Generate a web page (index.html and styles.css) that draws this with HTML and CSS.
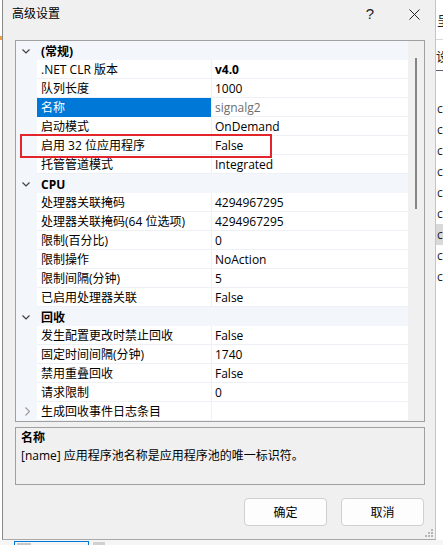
FILE: index.html
```html
<!DOCTYPE html>
<html lang="zh-CN">
<head>
<meta charset="utf-8">
<title>高级设置</title>
<link rel="stylesheet" href="styles.css">
</head>
<body>
<div class="screen">
  <div class="top">
    <div class="bg-left"><span class="bg-mark"></span></div>
    <div class="dialog">
      <div class="titlebar">
        <span class="title">高级设置</span>
        <span class="help">?</span>
        <span class="close"><svg width="11" height="11" viewBox="0 0 11 11"><path d="M0.5 0.5 L10.5 10.5 M10.5 0.5 L0.5 10.5" stroke="#222" stroke-width="1" fill="none"/></svg></span>
      </div>

      <div class="grid">
        <div class="rows">
          <div class="cat"><span class="chev"><svg width="8" height="5" viewBox="0 0 8 5"><path d="M0.5 0.5 L4 4 L7.5 0.5" stroke="#404040" stroke-width="1.2" fill="none"/></svg></span><span class="cat-name">(常规)</span></div>
          <div class="row"><span class="g"></span><span class="k">.NET CLR 版本</span><span class="v bold">v4.0</span></div>
          <div class="row"><span class="g"></span><span class="k">队列长度</span><span class="v">1000</span></div>
          <div class="row sel"><span class="g"></span><span class="k">名称</span><span class="v ro">signalg2</span></div>
          <div class="row"><span class="g"></span><span class="k">启动模式</span><span class="v">OnDemand</span></div>
          <div class="row"><span class="g"></span><span class="k">启用 32 位应用程序</span><span class="v">False</span></div>
          <div class="row"><span class="g"></span><span class="k">托管管道模式</span><span class="v">Integrated</span></div>

          <div class="cat"><span class="chev"><svg width="8" height="5" viewBox="0 0 8 5"><path d="M0.5 0.5 L4 4 L7.5 0.5" stroke="#404040" stroke-width="1.2" fill="none"/></svg></span><span class="cat-name">CPU</span></div>
          <div class="row"><span class="g"></span><span class="k">处理器关联掩码</span><span class="v">4294967295</span></div>
          <div class="row"><span class="g"></span><span class="k">处理器关联掩码(64 位选项)</span><span class="v">4294967295</span></div>
          <div class="row"><span class="g"></span><span class="k">限制(百分比)</span><span class="v">0</span></div>
          <div class="row"><span class="g"></span><span class="k">限制操作</span><span class="v">NoAction</span></div>
          <div class="row"><span class="g"></span><span class="k">限制间隔(分钟)</span><span class="v">5</span></div>
          <div class="row"><span class="g"></span><span class="k">已启用处理器关联</span><span class="v">False</span></div>

          <div class="cat"><span class="chev"><svg width="8" height="5" viewBox="0 0 8 5"><path d="M0.5 0.5 L4 4 L7.5 0.5" stroke="#404040" stroke-width="1.2" fill="none"/></svg></span><span class="cat-name">回收</span></div>
          <div class="row"><span class="g"></span><span class="k">发生配置更改时禁止回收</span><span class="v">False</span></div>
          <div class="row"><span class="g"></span><span class="k">固定时间间隔(分钟)</span><span class="v">1740</span></div>
          <div class="row"><span class="g"></span><span class="k">禁用重叠回收</span><span class="v">False</span></div>
          <div class="row"><span class="g"></span><span class="k">请求限制</span><span class="v">0</span></div>
          <div class="row"><span class="g"><svg width="5" height="9" viewBox="0 0 5 9"><path d="M0.5 0.5 L4.5 4.5 L0.5 8.5" stroke="#9a9a9a" stroke-width="1.1" fill="none"/></svg></span><span class="k">生成回收事件日志条目</span><span class="v"></span></div>
        </div>
        <div class="scroll"><div class="thumb"></div></div>
        <div class="highlight"></div>
      </div>

      <div class="desc">
        <div class="desc-title">名称</div>
        <div class="desc-text">[name] 应用程序池名称是应用程序池的唯一标识符。</div>
      </div>

      <div class="buttons">
        <button class="btn">确定</button>
        <button class="btn">取消</button>
      </div>

      <svg class="grip" width="8" height="8" viewBox="0 0 8 8">
        <rect x="6" y="0" width="2" height="2" fill="#b8b8b8"/>
        <rect x="3" y="3" width="2" height="2" fill="#b8b8b8"/>
        <rect x="6" y="3" width="2" height="2" fill="#b8b8b8"/>
        <rect x="0" y="6" width="2" height="2" fill="#b8b8b8"/>
        <rect x="3" y="6" width="2" height="2" fill="#b8b8b8"/>
        <rect x="6" y="6" width="2" height="2" fill="#b8b8b8"/>
      </svg>
    </div>
    <div class="bg-right">
      <div class="br-item br-a">呈</div>
      <div class="br-line"></div>
      <div class="br-item br-b">设</div>
      <div class="br-dark"></div>
      <div class="br-list">
        <div class="br-c">c</div>
        <div class="br-c">c</div>
        <div class="br-c">c</div>
        <div class="br-c">c</div>
        <div class="br-c">c</div>
        <div class="br-c">c</div>
        <div class="br-c hl">c</div>
        <div class="br-c">c</div>
        <div class="br-c">c</div>
      </div>
    </div>
  </div>
  <div class="bottom">
    <div class="tab-focus"><span class="tab-ico"></span></div>
    <span class="tab-ico2"></span>
  </div>
</div>
</body>
</html>
```

FILE: styles.css
```css
* { box-sizing: border-box; }

html, body {
  margin: 0;
  padding: 0;
  background: #ffffff;
}

body {
  width: 443px;
  height: 545px;
  overflow: hidden;
  font-family: "Open Sans", "Noto Sans CJK SC", sans-serif;
  font-size: 12px;
  color: #000;
}

.screen {
  width: 443px;
  height: 545px;
  display: flex;
  flex-direction: column;
}

.top {
  display: flex;
  height: 540px;
}

.bg-left {
  width: 2px;
  background: #ffffff;
  padding-top: 36px;
}

.bg-mark {
  display: block;
  width: 2px;
  height: 4px;
  background: #f0a040;
}

.dialog {
  position: relative;
  width: 434px;
  height: 540px;
  background: #f0f0f0;
  border-left: 1px solid #8a8a8a;
  border-right: 1px solid #c4c4c4;
  border-bottom: 1px solid #a8a8a8;
  display: flex;
  flex-direction: column;
}

.titlebar {
  height: 40px;
  display: flex;
  align-items: flex-start;
  padding-top: 6px;
  padding-left: 9px;
}

.title {
  line-height: 16px;
  font-size: 12px;
}

.help {
  margin-left: auto;
  width: 46px;
  text-align: center;
  font-family: "Liberation Sans", sans-serif;
  font-size: 15px;
  line-height: 16px;
  color: #222;
}

.close {
  width: 42px;
  height: 16px;
  display: flex;
  align-items: center;
  justify-content: center;
  padding-top: 1px;
}

.grid {
  position: relative;
  margin-left: 12px;
  width: 410px;
  height: 382px;
  border: 1px solid #a0a0a0;
  background: #ffffff;
  display: flex;
}

.rows {
  width: 392px;
  display: flex;
  flex-direction: column;
}

.cat {
  height: 19px;
  background: #f3f6fa;
  display: flex;
  align-items: center;
}

.chev {
  width: 21px;
  display: flex;
  justify-content: flex-end;
  padding-right: 7px;
  padding-top: 1px;
}

.cat-name {
  padding-left: 4px;
  padding-top: 1px;
  font-weight: bold;
  line-height: 19px;
}

.row {
  height: 19px;
  display: flex;
}

.g {
  width: 21px;
  height: 19px;
  background: #f3f6fa;
  display: flex;
  align-items: center;
  justify-content: center;
  padding-left: 1px;
}

.k {
  width: 174px;
  height: 19px;
  line-height: 18px;
  padding-top: 1px;
  padding-left: 4px;
  border-bottom: 1px solid #edf0f5;
  white-space: nowrap;
  overflow: hidden;
}

.v {
  flex: 1;
  height: 19px;
  line-height: 18px;
  padding-top: 1px;
  padding-left: 3px;
  border-left: 1px solid #edf0f5;
  border-bottom: 1px solid #edf0f5;
  white-space: nowrap;
  overflow: hidden;
}

.bold { font-weight: bold; }

.sel .k {
  background: #0078d7;
  color: #ffffff;
  border-bottom-color: #0078d7;
}

.ro { color: #6d6d6d; }

.scroll {
  width: 16px;
  background: #f0f0f0;
  padding-top: 17px;
  padding-left: 7px;
}

.thumb {
  width: 2px;
  height: 151px;
  background: #858585;
}

.highlight {
  position: absolute;
  left: 4px;
  top: 93px;
  width: 252px;
  height: 24px;
  border: 2px solid #e3242b;
}

.desc {
  margin-top: 5px;
  margin-left: 12px;
  width: 410px;
  height: 58px;
  border: 1px solid #a0a0a0;
  background: #f0f0f0;
  padding: 2px 5px;
}

.desc-title {
  font-weight: bold;
  line-height: 16px;
}

.desc-text {
  margin-top: 2px;
  line-height: 16px;
}

.buttons {
  margin-top: 13px;
  display: flex;
  justify-content: flex-end;
  gap: 14px;
  padding-right: 11px;
}

.btn {
  width: 83px;
  height: 28px;
  background: #fdfdfd;
  border: 1px solid #d0d0d0;
  border-radius: 4px;
  font-family: "Open Sans", "Noto Sans CJK SC", sans-serif;
  font-size: 12px;
  color: #000;
  padding: 0;
}

.grip {
  position: absolute;
  right: 2px;
  bottom: 2px;
}

.bg-right {
  width: 7px;
  background: #ffffff;
  overflow: hidden;
  display: flex;
  flex-direction: column;
  font-family: "Noto Sans CJK SC", sans-serif;
}

.br-item {
  font-size: 13px;
  line-height: 16px;
  white-space: nowrap;
  color: #222;
}

.br-a { margin-top: 12px; margin-left: 1px; }

.br-line {
  margin-top: 11px;
  height: 1px;
  background: #d8d8d8;
}

.br-b {
  margin-top: 8px;
  margin-left: 0;
}

.br-dark {
  margin-top: 6px;
  height: 1px;
  background: #606070;
}

.br-list {
  margin-top: 27px;
  display: flex;
  flex-direction: column;
}

.br-c {
  height: 21px;
  line-height: 21px;
  font-family: "Open Sans", sans-serif;
  font-size: 12px;
  color: #222;
  padding-left: 1px;
}

.br-c.hl { background: #d9d9d9; }

.bottom {
  height: 5px;
  background: #f5f5f5;
  display: flex;
  align-items: flex-end;
  padding-left: 14px;
}

.tab-focus {
  width: 75px;
  height: 4px;
  border: 1px solid #0078d7;
  border-bottom: none;
  padding-left: 2px;
  padding-top: 1px;
}

.tab-ico {
  display: block;
  width: 14px;
  height: 3px;
  background: #c8c8c8;
}

.tab-ico2 {
  display: block;
  margin-left: 4px;
  width: 12px;
  height: 3px;
  background: #d0d0d0;
}
```
